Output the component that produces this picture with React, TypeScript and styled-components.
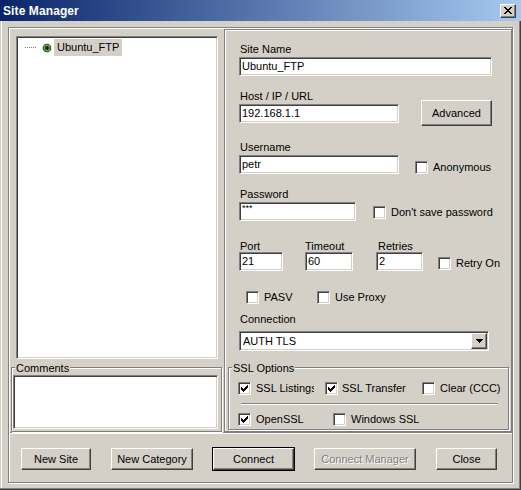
import React from 'react';
import styled, { createGlobalStyle, css } from 'styled-components';

const face = '#d4d0c8';
const shadow = '#808080';
const darkShadow = '#404040';
const light = '#ffffff';

const GlobalStyle = createGlobalStyle`
  body {
    margin: 0;
    background: ${face};
    font-family: "Liberation Sans", Arial, sans-serif;
    font-size: 11px;
    color: #000;
  }
`;

const sunken = css`
  border: 1px solid;
  border-color: ${shadow} ${light} ${light} ${shadow};
  box-shadow: inset 1px 1px ${darkShadow}, inset -1px -1px ${face};
`;

const raised = css`
  border: 1px solid;
  border-color: ${light} ${darkShadow} ${darkShadow} ${light};
  box-shadow: inset -1px -1px ${shadow};
`;

const etched = css`
  border: 1px solid ${shadow};
  box-shadow: inset 1px 1px ${light}, 1px 1px ${light};
`;

const Window = styled.div`
  width: 521px;
  height: 490px;
  box-sizing: border-box;
  display: flex;
  flex-direction: column;
  background: ${face};
  box-shadow: inset -1px -1px ${darkShadow}, inset -2px -2px ${shadow}, inset 1px 0 ${face}, inset 2px 0 ${light};
`;

const TitleBar = styled.div`
  height: 21px;
  display: flex;
  align-items: center;
  justify-content: space-between;
  padding: 0 5px 0 3px;
  background: linear-gradient(to right, #0a246a, #a6caf0);
`;

const Title = styled.span`
  color: #fff;
  font-weight: bold;
  font-size: 12px;
  letter-spacing: 0.1px;
`;

const CloseButton = styled.div`
  width: 16px;
  height: 14px;
  box-sizing: border-box;
  background: ${face};
  display: flex;
  align-items: center;
  justify-content: center;
  ${raised};
`;

const Body = styled.div`
  flex: 1;
  display: flex;
  padding: 6px 8px 7px 8px;
`;

const Frame = styled.div`
  flex: 1;
  display: flex;
  flex-direction: column;
  padding: 1px 0 0 1px;
  ${etched};
`;

const TopArea = styled.div`
  height: 403px;
  display: flex;
`;

const LeftPane = styled.div`
  width: 214px;
  display: flex;
  flex-direction: column;
`;

const TreeBox = styled.div`
  margin: 7px 0 0 6px;
  width: 202px;
  height: 323px;
  box-sizing: border-box;
  background: #fff;
  padding: 2px 0 0 8px;
  ${sunken};
`;

const TreeItem = styled.div`
  display: flex;
  align-items: center;
  height: 17px;
`;

const TreeLine = styled.div`
  width: 11px;
  border-top: 1px dotted ${shadow};
  margin-right: 6px;
`;

const TreeText = styled.span`
  background: ${face};
  padding: 0 3px;
  line-height: 17px;
  margin-left: 2px;
`;

const GroupBox = styled.div<{ $mt: number; $ml: number }>`
  position: relative;
  margin: ${(p) => p.$mt}px 2px 0 ${(p) => p.$ml}px;
  ${etched};
`;

const GroupLabel = styled.span`
  position: absolute;
  top: -7px;
  left: 3px;
  padding: 0 1px;
  line-height: 14px;
  background: ${face};
`;

const CommentArea = styled.div`
  margin: 7px 3px 2px 1px;
  height: 54px;
  background: #fff;
  box-sizing: border-box;
  ${sunken};
`;

const RightPane = styled.div`
  flex: 1;
  display: flex;
  flex-direction: column;
  padding-left: 14px;
  ${etched};
  box-shadow: inset 1px 1px ${light};
`;

const FormLabel = styled.div<{ $mt?: number; $pl?: number }>`
  height: 13px;
  line-height: 15px;
  margin-top: ${(p) => p.$mt ?? 0}px;
  padding-left: ${(p) => p.$pl ?? 1}px;
  white-space: nowrap;
`;

const TextBox = styled.div<{ $w: number; $mt?: number; $small?: boolean }>`
  width: ${(p) => p.$w}px;
  height: 19px;
  margin-top: ${(p) => p.$mt ?? 2}px;
  box-sizing: border-box;
  background: #fff;
  padding: 0 2px;
  line-height: ${(p) => (p.$small ? '11px' : '17px')};
  font-size: ${(p) => (p.$small ? '9px' : '11px')};
  white-space: nowrap;
  ${sunken};
`;

const Row = styled.div<{ $mt?: number }>`
  display: flex;
  align-items: flex-end;
  margin-top: ${(p) => p.$mt ?? 0}px;
`;

const Column = styled.div<{ $ml?: number }>`
  display: flex;
  flex-direction: column;
  margin-left: ${(p) => p.$ml ?? 0}px;
`;

const Button = styled.div<{ $w: number; $h?: number; $default?: boolean; $disabled?: boolean }>`
  width: ${(p) => p.$w}px;
  height: ${(p) => p.$h ?? 22}px;
  box-sizing: border-box;
  display: flex;
  align-items: center;
  justify-content: center;
  background: ${face};
  white-space: nowrap;
  ${raised};
  ${(p) =>
    p.$default &&
    css`
      outline: 1px solid #000;
      outline-offset: 0;
    `}
  ${(p) =>
    p.$disabled &&
    css`
      color: ${shadow};
      text-shadow: 1px 1px ${light};
    `}
`;

const SideButton = styled(Button)<{ $ml: number }>`
  margin-left: ${(p) => p.$ml}px;
  margin-bottom: -3px;
`;

const CheckItem = styled.div<{ $ml?: number; $w?: number; $mb?: number }>`
  display: flex;
  align-items: center;
  height: 13px;
  margin-left: ${(p) => p.$ml ?? 0}px;
  margin-bottom: ${(p) => p.$mb ?? 0}px;
  width: ${(p) => (p.$w ? `${p.$w}px` : 'auto')};
  flex-shrink: 0;
`;

const CheckBoxBox = styled.div`
  width: 13px;
  height: 13px;
  box-sizing: border-box;
  background: #fff;
  display: flex;
  align-items: center;
  justify-content: center;
  flex-shrink: 0;
  ${sunken};
`;

const CheckLabel = styled.span<{ $gap?: number; $clip?: number }>`
  margin-left: ${(p) => p.$gap ?? 5}px;
  white-space: nowrap;
  line-height: 13px;
  ${(p) =>
    p.$clip &&
    css`
      max-width: ${p.$clip}px;
      overflow: hidden;
    `}
`;

const Select = styled.div`
  width: 250px;
  height: 20px;
  margin-top: 6px;
  box-sizing: border-box;
  background: #fff;
  display: flex;
  align-items: center;
  justify-content: space-between;
  padding: 0 1px 0 3px;
  ${sunken};
`;

const DropButton = styled.div`
  width: 16px;
  height: 16px;
  box-sizing: border-box;
  background: ${face};
  display: flex;
  align-items: center;
  justify-content: center;
  ${raised};
`;

const SslGroup = styled(GroupBox)`
  margin-right: 2px;
  padding: 14px 0 3px 9px;
`;

const Separator = styled.div`
  height: 0;
  margin: 8px 10px 0 3px;
  border-top: 1px solid ${shadow};
  border-bottom: 1px solid ${light};
`;

const FrameSeparator = styled.div`
  border-top: 1px solid ${shadow};
  border-bottom: 1px solid ${light};
`;

const ButtonBar = styled.div`
  flex: 1;
  display: flex;
  align-items: flex-start;
  gap: 20px;
  padding: 14px 0 0 11px;
`;

const Check = ({ checked }: { checked?: boolean }) => (
  <CheckBoxBox>
    {checked ? (
      <svg width="7" height="7" viewBox="0 0 7 7" shapeRendering="crispEdges">
        <path d="M0 2h1v1h1v1h1v-1h1v-1h1v-1h1v-1h1v3h-1v1h-1v1h-1v1h-1v1h-1v-1h-1v-1h-1z" fill="#000" />
      </svg>
    ) : null}
  </CheckBoxBox>
);

interface CheckboxProps {
  label: string;
  checked?: boolean;
  ml?: number;
  w?: number;
  mb?: number;
  clip?: number;
  gap?: number;
}

const Checkbox = ({ label, checked, ml, w, mb, clip, gap }: CheckboxProps) => (
  <CheckItem $ml={ml} $w={w} $mb={mb}>
    <Check checked={checked} />
    <CheckLabel $clip={clip} $gap={gap}>
      {label}
    </CheckLabel>
  </CheckItem>
);

const SiteIcon = () => (
  <svg width="10" height="10" viewBox="0 0 10 10">
    <circle cx="5" cy="5" r="4.3" fill="#1d3b18" />
    <circle cx="5" cy="5" r="2.8" fill="none" stroke="#6fae4c" strokeWidth="1.3" />
    <circle cx="5" cy="5" r="1" fill="#10200c" />
  </svg>
);

export default function App() {
  return (
    <>
      <GlobalStyle />
      <Window>
        <TitleBar>
          <Title>Site Manager</Title>
          <CloseButton>
            <svg width="8" height="7" viewBox="0 0 8 7" shapeRendering="crispEdges">
              <path d="M0 0h2l2 2.5L6 0h2L5 3.5 8 7H6L4 4.5 2 7H0l3-3.5z" fill="#000" />
            </svg>
          </CloseButton>
        </TitleBar>
        <Body>
          <Frame>
            <TopArea>
              <LeftPane>
                <TreeBox>
                  <TreeItem>
                    <TreeLine />
                    <SiteIcon />
                    <TreeText>Ubuntu_FTP</TreeText>
                  </TreeItem>
                </TreeBox>
                <GroupBox $mt={8} $ml={1}>
                  <GroupLabel>Comments</GroupLabel>
                  <CommentArea />
                </GroupBox>
              </LeftPane>
              <RightPane>
                <FormLabel $mt={12}>Site Name</FormLabel>
                <TextBox $w={253}>Ubuntu_FTP</TextBox>

                <Row $mt={13}>
                  <Column>
                    <FormLabel>Host / IP / URL</FormLabel>
                    <TextBox $w={160}>192.168.1.1</TextBox>
                  </Column>
                  <SideButton $w={71} $h={26} $ml={22}>
                    Advanced
                  </SideButton>
                </Row>

                <Row $mt={17}>
                  <Column>
                    <FormLabel>Username</FormLabel>
                    <TextBox $w={160}>petr</TextBox>
                  </Column>
                  <Checkbox label="Anonymous" ml={16} />
                </Row>

                <Row $mt={13}>
                  <Column>
                    <FormLabel>Password</FormLabel>
                    <TextBox $w={117} $small>
                      ***
                    </TextBox>
                  </Column>
                  <Checkbox label="Don't save password" ml={17} mb={2} />
                </Row>

                <Row $mt={18}>
                  <Column>
                    <FormLabel>Port</FormLabel>
                    <TextBox $w={44} $mt={0}>
                      21
                    </TextBox>
                  </Column>
                  <Column $ml={22}>
                    <FormLabel $pl={0}>Timeout</FormLabel>
                    <TextBox $w={48} $mt={0}>
                      60
                    </TextBox>
                  </Column>
                  <Column $ml={23}>
                    <FormLabel $pl={2}>Retries</FormLabel>
                    <TextBox $w={47} $mt={0}>
                      2
                    </TextBox>
                  </Column>
                  <Checkbox label="Retry On" ml={15} mb={1} />
                </Row>

                <Row $mt={20}>
                  <Checkbox label="PASV" ml={7} w={71} />
                  <Checkbox label="Use Proxy" />
                </Row>

                <FormLabel $mt={8}>Connection</FormLabel>
                <Select>
                  <span>AUTH TLS</span>
                  <DropButton>
                    <svg width="7" height="4" viewBox="0 0 7 4" shapeRendering="crispEdges">
                      <path d="M0 0h7v1h-1v1h-1v1h-1v1h-1v-1h-1v-1h-1v-1h-1z" fill="#000" />
                    </svg>
                  </DropButton>
                </Select>

                <SslGroup $mt={16} $ml={-11}>
                  <GroupLabel>SSL Options</GroupLabel>
                  <Row>
                    <Checkbox label="SSL Listings" checked w={87} clip={58} />
                    <Checkbox label="SSL Transfer" checked w={97} gap={4} />
                    <Checkbox label="Clear (CCC)" />
                  </Row>
                  <Separator />
                  <Row $mt={8}>
                    <Checkbox label="OpenSSL" checked w={95} />
                    <Checkbox label="Windows SSL" />
                  </Row>
                </SslGroup>
              </RightPane>
            </TopArea>
            <FrameSeparator />
            <ButtonBar>
              <Button $w={70}>New Site</Button>
              <Button $w={82}>New Category</Button>
              <Button $w={81} $default>
                Connect
              </Button>
              <Button $w={102} $disabled>
                Connect Manager
              </Button>
              <Button $w={61}>Close</Button>
            </ButtonBar>
          </Frame>
        </Body>
      </Window>
    </>
  );
}
